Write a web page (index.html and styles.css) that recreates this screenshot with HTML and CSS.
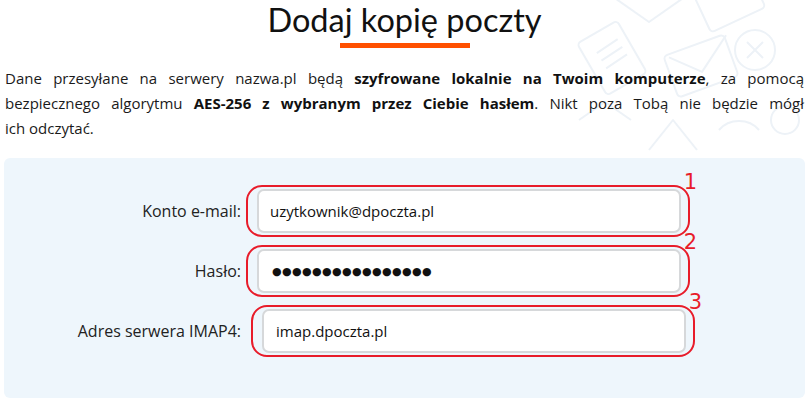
FILE: index.html
```html
<!DOCTYPE html>
<html lang="pl">
<head>
  <meta charset="UTF-8" />
  <meta name="viewport" content="width=device-width, initial-scale=1.0" />
  <title>Dodaj kopię poczty</title>
  <link rel="stylesheet" href="styles.css">
</head>
<body>
  <svg class="bg-icons" width="260" height="170" viewBox="0 0 260 170" fill="none" stroke="#edf2f7" stroke-width="2" stroke-linejoin="round">
    <path d="M60 -6 l40 28 l40 -28" />
    <rect x="150" y="-20" width="60" height="42" rx="4" transform="rotate(-25 180 0)" />
    <rect x="40" y="28" width="46" height="60" rx="4" transform="rotate(-30 63 58)" />
    <path d="M48 52 l22 -12 M52 60 l22 -12 M56 68 l22 -12" transform="rotate(-5 60 55)" />
    <rect x="120" y="44" width="64" height="44" rx="4" transform="rotate(-20 152 66)" />
    <path d="M122 52 l30 20 l30 -32" transform="rotate(-10 152 66)" />
    <circle cx="206" cy="50" r="20" />
    <path d="M198 42 l16 16 M214 42 l-16 16" />
    <path d="M30 120 l26 -18 l26 18 M100 150 l24 -30 l24 30 M170 130 c10 -12 30 -12 40 0" />
    <circle cx="236" cy="120" r="14" />
  </svg>

  <main class="page">
    <h1 class="title">Dodaj kopię poczty</h1>

    <p class="intro">
      <span class="line">Dane przesyłane na serwery nazwa.pl będą <b>szyfrowane lokalnie na Twoim komputerze</b>, za pomocą</span>
      <span class="line">bezpiecznego algorytmu <b>AES-256 z wybranym przez Ciebie hasłem</b>. Nikt poza Tobą nie będzie mógł</span>
      <span class="line last">ich odczytać.</span>
    </p>

    <form class="panel">
      <div class="row">
        <label for="email">Konto e-mail:</label>
        <div class="field">
          <input type="text" id="email" value="uzytkownik@dpoczta.pl">
          <span class="mark"><i>1</i></span>
        </div>
      </div>
      <div class="row">
        <label for="pass">Hasło:</label>
        <div class="field">
          <input type="text" id="pass" class="dots" value="●●●●●●●●●●●●●●●●">
          <span class="mark"><i>2</i></span>
        </div>
      </div>
      <div class="row row-imap">
        <label for="imap">Adres serwera IMAP4:</label>
        <div class="field">
          <input type="text" id="imap" value="imap.dpoczta.pl">
          <span class="mark"><i>3</i></span>
        </div>
      </div>
    </form>
  </main>
</body>
</html>
```

FILE: styles.css
```css
* { box-sizing: border-box; }
body {
  margin: 0; padding: 0;
  background: #fff;
  color: #111; font-family: 'Open Sans', 'Lato', sans-serif;
}

.bg-icons {
  position: absolute; top: 0; right: 0;
}

.page {
  position: relative;
  padding: 0 4px;
}

.title {
  margin: 0; padding-top: 1px;
  text-align: center;
  font-family: 'Lato', sans-serif;
  font-size: 32.5px; font-weight: 400;
  line-height: 38px; color: #111;
}
.title::after {
  content: ""; display: block;
  width: 130px; height: 5px;
  margin: 4px auto 0;
  background: #ff5000;
}

.intro {
  margin: 18px 0 0; padding: 0 1px;
  font-size: 15px; line-height: 25px;
  color: #1a1a1a;
}
.intro .line {
  display: block;
  text-align: justify; text-align-last: justify;
}
.intro .line.last { text-align-last: left; }
.intro b { font-weight: 700; color: #111; }

.panel {
  margin-top: 17px;
  background: #eef6fc;
  border-radius: 6px;
  padding: 31px 0 45px;
  display: flex; flex-direction: column;
  gap: 16px;
}

.row {
  display: grid;
  grid-template-columns: 237px 424px;
  column-gap: 16px;
  align-items: center;
}
.row label {
  text-align: right;
  font-size: 16px; color: #222;
}
.field { position: relative; }
.field input {
  display: block;
  width: 100%; height: 44px;
  padding: 0 11px;
  border: 2px solid #d6d8da; border-radius: 7px;
  background: #fff;
  font-family: 'Open Sans', sans-serif;
  font-size: 15px; color: #111;
  outline: none;
}
.field input.dots {
  font-family: 'DejaVu Sans', sans-serif;
  font-size: 11px; letter-spacing: 0.4px;
  padding-left: 13px;
}

.mark {
  position: absolute;
  top: -4px; bottom: -4px;
  left: -11px; right: -9px;
  border: 2px solid #e81c2a;
  border-radius: 16px;
  pointer-events: none;
}
.mark i {
  position: absolute;
  top: -15px; right: -9px;
  font-style: normal;
  font-family: 'DejaVu Sans', sans-serif;
  font-size: 21px; line-height: 21px;
  color: #e81c2a;
}

.row-imap label { padding-left: 0; }
.row-imap .field { margin-left: 5px; margin-right: -5px; }
.row-imap .field input { padding-left: 12px; }
```
